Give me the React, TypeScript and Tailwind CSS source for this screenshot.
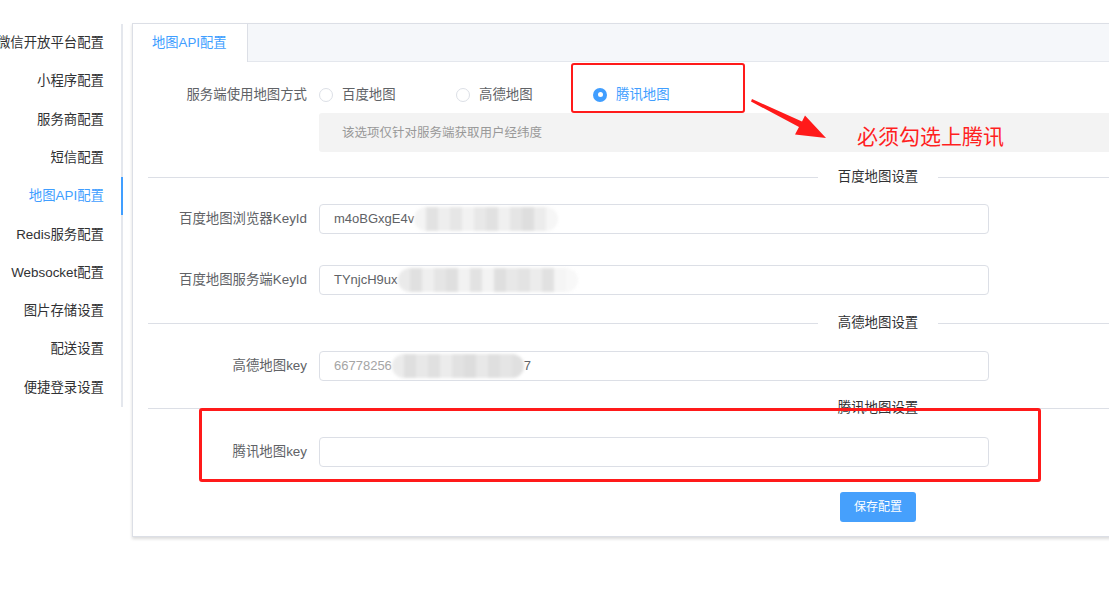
import React from 'react';

const MENU = [
  '微信开放平台配置',
  '小程序配置',
  '服务商配置',
  '短信配置',
  '地图API配置',
  'Redis服务配置',
  'Websocket配置',
  '图片存储设置',
  '配送设置',
  '便捷登录设置',
];

const Mosaic = ({ cells }: { cells: string[] }) => (
  <span className="inline-flex h-[24px] rounded-[12px] overflow-hidden blur-[1.5px]">
    {cells.map((c, i) => (
      <span key={i} className="w-[12px] h-full" style={{ background: c }} />
    ))}
  </span>
);

const Divider = ({ title }: { title: string }) => (
  <div className="flex items-center h-5">
    <div className="flex-1 h-px bg-[#dcdfe6]" />
    <span className="px-5 text-[13.4px] text-[#303133]">{title}</span>
    <div className="flex-1 h-px bg-[#dcdfe6]" />
  </div>
);

const Row = ({ label, children }: { label: string; children?: React.ReactNode }) => (
  <div className="flex items-center h-[30px]">
    <div className="w-[171px] pr-[12px] text-right text-[13.4px] text-[#606266] shrink-0">{label}</div>
    <div className="w-[670px] h-[30px] border border-[#dcdfe6] rounded-[4px] pl-[14px] flex items-center text-[13px] text-[#606266] overflow-hidden">
      {children}
    </div>
  </div>
);

const Radio = ({ label, checked }: { label: string; checked?: boolean }) => (
  <div className="w-[137px] flex items-center gap-[9px]">
    {checked ? (
      <span className="w-[14px] h-[14px] rounded-full bg-[#409eff] flex items-center justify-center">
        <span className="w-[5px] h-[5px] rounded-full bg-white" />
      </span>
    ) : (
      <span className="w-[14px] h-[14px] rounded-full border border-[#dcdfe6] bg-white" />
    )}
    <span className={`text-[13.4px] ${checked ? 'text-[#409eff]' : 'text-[#606266]'}`}>{label}</span>
  </div>
);

export default function App() {
  return (
    <div className="relative w-[1109px] h-[601px] overflow-hidden bg-white font-['Liberation_Sans','Noto_Sans_CJK_SC',sans-serif]">
      <div className="flex pt-[23px]">
        {/* Sidebar */}
        <div className="w-[123px] shrink-0 pt-px">
          {MENU.map((m, i) => (
            <div
              key={m}
              className={`h-[38.3px] flex items-center justify-end pr-[17px] text-[13.4px] whitespace-nowrap border-r-2 ${
                i === 4 ? 'border-[#409eff] text-[#409eff]' : 'border-[#e4e7ed] text-[#303133]'
              }`}
            >
              {m}
            </div>
          ))}
        </div>

        {/* Card */}
        <div className="ml-[9px] w-[1492px] shrink-0 border border-[#dcdfe6] bg-white shadow-[0_2px_3px_rgba(0,0,0,0.14)]">
          <div className="flex h-[38px] bg-[#f5f7fa] border-b border-[#e4e7ed]">
            <div className="h-[38px] -mb-px bg-white pl-[19px] pr-[20px] border-r border-[#dcdfe6] flex items-center text-[13.3px] text-[#409eff]">
              地图API配置
            </div>
          </div>

          <div className="px-[15px] pt-[18px] pb-[14px]">
            <div className="flex items-center h-[30px]">
              <div className="w-[171px] pr-[12px] text-right text-[13.4px] text-[#606266] shrink-0">服务端使用地图方式</div>
              <Radio label="百度地图" />
              <Radio label="高德地图" />
              <Radio label="腾讯地图" checked />
            </div>
            <div className="ml-[171px] mt-[3px] h-[39px] bg-[#f3f3f3] rounded-[3px] pl-[23px] pt-[2px] flex items-center text-[12.5px] text-[#999999]">
              该选项仅针对服务端获取用户经纬度
            </div>

            <div className="mt-[15px]">
              <Divider title="百度地图设置" />
            </div>
            <div className="mt-[17px]">
              <Row label="百度地图浏览器KeyId">
                <span>m4oBGxgE4v</span>
                <Mosaic cells={['#f4f4f4', '#e2e2e2', '#eeeeee', '#e6e6e6', '#f2f2f2', '#e8e8e8', '#e1e1e1', '#f0f0f0', '#e5e5e5', '#dedede', '#ececec', '#f6f6f6']} />
              </Row>
            </div>
            <div className="mt-[31px]">
              <Row label="百度地图服务端KeyId">
                <span>TYnjcH9ux</span>
                <Mosaic cells={['#eaeaea', '#e0e0e0', '#efefef', '#e5e5e5', '#dfdfdf', '#f2f2f2', '#e2e2e2', '#f3f3f3', '#dfdfdf', '#e8e8e8', '#e3e3e3', '#ececec', '#e1e1e1', '#f5f5f5', '#f8f8f8']} />
              </Row>
            </div>

            <div className="mt-[18px]">
              <Divider title="高德地图设置" />
            </div>
            <div className="mt-[18px]">
              <Row label="高德地图key">
                <span className="text-[#a5a5a5]">66778256</span>
                <Mosaic cells={['#ebebeb', '#dfdfdf', '#e8e8e8', '#e0e0e0', '#ececec', '#e2e2e2', '#dddddd', '#e8e8e8', '#dfdfdf', '#e5e5e5', '#e0e0e0']} />
                <span>7</span>
              </Row>
            </div>

            <div className="mt-[17px]">
              <Divider title="腾讯地图设置" />
            </div>
            <div className="mt-[19px]">
              <Row label="腾讯地图key" />
            </div>

            <div className="mt-[25px] flex justify-center">
              <button className="w-[76px] h-[30px] rounded-[3px] bg-[#46a0fc] text-white text-[12px]">保存配置</button>
            </div>
          </div>
        </div>
      </div>

      {/* Annotations */}
      <div className="absolute left-[571px] top-[63px] w-[174px] h-[50px] border-2 border-[#ff1a1a] rounded-[3px]" />
      <div className="absolute left-[199px] top-[408px] w-[842px] h-[74px] border-[3px] border-[#ff1a1a] rounded-[3px]" />
      <svg className="absolute left-0 top-0" width="1109" height="601">
        <polygon points="752,99 802,121.5 805,115.5 826,138 795,134.5 799,127 751,101.5" fill="#ff1a1a" />
      </svg>
      <div className="absolute left-[857px] top-[124px] text-[21px] leading-[26px] text-[#ff1f1f]">必须勾选上腾讯</div>
    </div>
  );
}
